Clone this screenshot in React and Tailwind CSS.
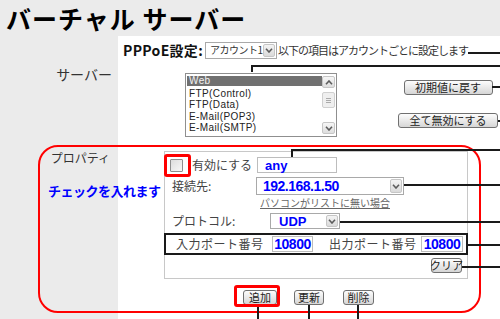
const Chevron = ({ up }) => (
  <svg width="8" height="5" viewBox="0 0 8 5">
    <polyline points={up ? "1,4.2 4,1 7,4.2" : "1,0.8 4,4 7,0.8"} fill="none" stroke="#5c5c5c" strokeWidth="1.6" />
  </svg>
);

function Select({ className, text, textClass, arrowClass }) {
  return (
    <div className={"flex items-stretch border border-[#a9a9a9] bg-white p-px " + className}>
      <div className={"flex-1 flex items-center whitespace-nowrap leading-none " + textClass}>{text}</div>
      <div className={"flex items-center justify-center bg-linear-to-b from-[#f4f4f4] to-[#dadada] border border-[#c6c6c6] rounded-[2px] " + arrowClass}>
        <Chevron />
      </div>
    </div>
  );
}

function Btn({ className, children }) {
  return (
    <div className={"flex items-center justify-center border border-[#707070] rounded-[3px] bg-linear-to-b from-[#fdfdfd] to-[#d6d6d6] text-[11px] leading-none text-[#222] whitespace-nowrap " + className}>
      {children}
    </div>
  );
}

function Input({ className, children }) {
  return (
    <div className={"flex items-center border border-[#bdbdbd] bg-white font-['Liberation_Sans',Arial,sans-serif] font-bold text-[#0000ff] leading-none " + className}>
      {children}
    </div>
  );
}

export default function App() {
  return (
    <div className="relative w-[500px] h-[319px] overflow-hidden bg-[#ebebeb] font-['Noto_Sans_CJK_JP',sans-serif] text-[#333]">
      <div className="h-[36px] pl-[6px] text-[25px] leading-[36px] font-bold tracking-[1px] text-black whitespace-nowrap">
        バーチャル サーバー
      </div>

      {/* PPPoE row */}
      <div className="flex h-[28px]">
        <div className="w-[118px] shrink-0" />
        <div className="flex-1 bg-white flex items-center pl-[5px] whitespace-nowrap">
          <span className="text-[14px] leading-[16px] font-bold text-[#111] tracking-[0.3px]">PPPoE設定:</span>
          <Select className="ml-[2px] w-[72px] h-[17px]" text="アカウント1" textClass="pl-[3px] text-[10px] tracking-[-0.5px] text-[#333]" arrowClass="w-[13px]" />
          <span className="ml-[1px] text-[11px] tracking-[-1px] leading-[16px] text-[#333]">以下の項目はアカウントごとに設定します</span>
        </div>
      </div>

      {/* Server row */}
      <div className="flex h-[82px]">
        <div className="w-[118px] shrink-0 text-right pr-[6px] pt-[2px] text-[14px] leading-[16px] text-[#333]">サーバー</div>
        <div className="flex-1 bg-white flex items-start">
          <div className="ml-[67px] mt-[9px] w-[152px] h-[64px] border border-[#8f8f8f] bg-white flex">
            <div className="flex-1 pt-[2px] pl-px font-['Liberation_Sans',Arial,sans-serif] text-[10px] tracking-[0.4px] leading-[11.5px] text-[#222] whitespace-nowrap">
              <div className="bg-[#707070] text-[#f2f2f2] pl-[2px] h-[10px] leading-[10px] mb-[1.5px]">Web</div>
              <div className="pl-[2px]">FTP(Control)</div>
              <div className="pl-[2px]">FTP(Data)</div>
              <div className="pl-[2px]">E-Mail(POP3)</div>
              <div className="pl-[2px]">E-Mail(SMTP)</div>
            </div>
            <div className="w-[14px] flex flex-col py-[2px] pr-px gap-[2px]">
              <div className="h-[12px] flex items-center justify-center border border-[#c6c6c6] rounded-[2px] bg-linear-to-b from-[#f6f6f6] to-[#dedede]">
                <Chevron up />
              </div>
              <div className="h-[16px] mt-[2px] flex flex-col items-center justify-center gap-[1px] border border-[#d0d0d0] rounded-[2px] bg-[#efefef]">
                <div className="w-[5px] h-px bg-[#aaa]" />
                <div className="w-[5px] h-px bg-[#aaa]" />
                <div className="w-[5px] h-px bg-[#aaa]" />
              </div>
              <div className="flex-1" />
              <div className="h-[12px] flex items-center justify-center border border-[#c6c6c6] rounded-[2px] bg-linear-to-b from-[#f6f6f6] to-[#dedede]">
                <Chevron />
              </div>
            </div>
          </div>
          <div className="ml-[61px] w-[100px] flex flex-col items-center pt-[16px] gap-[18px]">
            <Btn className="w-[89px] h-[15px]">初期値に戻す</Btn>
            <Btn className="w-[100px] h-[15px]">全て無効にする</Btn>
          </div>
        </div>
      </div>

      {/* Property row */}
      <div className="flex h-[173px]">
        <div className="w-[118px] shrink-0 text-right pr-[8px] pt-[4px] text-[12px] leading-[16px] text-[#333]">プロパティ</div>
        <div className="flex-1 bg-white pl-[46px] pt-[5px]">
          <div className="w-[304px] h-[128px] border border-[#c8c8c8] flex flex-col text-[12px] leading-[16px] text-[#444] whitespace-nowrap">
            <div className="flex items-center h-[16px] mt-[5px]">
              <div className="w-[92px] flex items-center pl-[5px]">
                <div className="w-[13px] h-[13px] border border-[#8e8e8e] bg-linear-to-br from-[#dcdcdc] to-[#f8f8f8] rounded-[1px]" />
                <span className="ml-[9px]">有効にする</span>
              </div>
              <Input className="w-[80px] h-[16px] pl-[7px] text-[13px]">any</Input>
            </div>
            <div className="flex items-center h-[18px] mt-[4px]">
              <div className="w-[91px] pl-[7px]">接続先:</div>
              <Select className="w-[148px] h-[18px]" text="192.168.1.50" textClass="pl-[5px] font-['Liberation_Sans',Arial,sans-serif] font-bold text-[14px] tracking-[-0.5px] text-[#0000ff]" arrowClass="w-[12px]" />
            </div>
            <div className="h-[14px] mt-px pl-[95px] text-[10px] leading-[14px] text-[#666] underline">パソコンがリストに無い場合</div>
            <div className="flex items-center h-[16px] mt-[3px]">
              <div className="w-[91px] pl-[7px]">プロトコル:</div>
              <Select className="ml-[14px] w-[70px] h-[16px]" text="UDP" textClass="pl-[7px] font-['Liberation_Sans',Arial,sans-serif] font-bold text-[13px] text-[#0000ff]" arrowClass="w-[12px]" />
            </div>
            <div className="-mx-px mt-[4px] h-[22px] border-2 border-[#1a1a1a] flex items-center text-[12px] tracking-[0.5px]">
              <span className="w-[106px] pl-[10px]">入力ポート番号</span>
              <Input className="w-[41px] h-[16px] justify-center text-[14px] tracking-[-0.5px]">10800</Input>
              <span className="ml-[16px] w-[92px]">出力ポート番号</span>
              <Input className="w-[42px] h-[16px] justify-center text-[14px] tracking-[-0.5px]">10800</Input>
            </div>
            <div className="flex justify-end pr-[5px] mt-[3px]">
              <Btn className="w-[31px] h-[15px]">クリア</Btn>
            </div>
          </div>
          <div className="flex mt-[11px] ml-[79px]">
            <Btn className="w-[34px] h-[15px]">追加</Btn>
            <Btn className="ml-[17px] w-[30px] h-[15px]">更新</Btn>
            <Btn className="ml-[19px] w-[31px] h-[15px]">削除</Btn>
          </div>
        </div>
      </div>

      {/* Annotations */}
      <div className="absolute left-[38px] top-[145px] w-[443px] h-[168px] border-2 border-[#ff0000] rounded-[20px]" />
      <div className="absolute left-[164px] top-[154px] w-[27px] h-[23px] border-[3px] border-[#ff0000] rounded-[3px]" />
      <div className="absolute left-[234px] top-[285px] w-[46px] h-[22px] border-[3px] border-[#ff0000] rounded-[3px]" />
      <div className="absolute left-[48px] top-[183px] text-[13px] leading-[16px] font-bold tracking-[-0.5px] text-[#0000ff] whitespace-nowrap">チェックを入れます</div>

      <div className="absolute left-[468px] top-[52px] w-[32px] h-[2px] bg-[#1a1a1a]" />
      <div className="absolute left-[251px] top-[65px] w-[249px] h-[2px] bg-[#1a1a1a]" />
      <div className="absolute left-[251px] top-[65px] w-[2px] h-[7px] bg-[#1a1a1a]" />
      <div className="absolute left-[492px] top-[86px] w-[8px] h-[2px] bg-[#1a1a1a]" />
      <div className="absolute left-[498px] top-[120px] w-[2px] h-[2px] bg-[#1a1a1a]" />
      <div className="absolute left-[291px] top-[149px] w-[209px] h-[2px] bg-[#1a1a1a]" />
      <div className="absolute left-[291px] top-[149px] w-[2px] h-[8px] bg-[#1a1a1a]" />
      <div className="absolute left-[404px] top-[184px] w-[96px] h-[2px] bg-[#1a1a1a]" />
      <div className="absolute left-[340px] top-[221px] w-[160px] h-[2px] bg-[#1a1a1a]" />
      <div className="absolute left-[468px] top-[244px] w-[32px] h-[2px] bg-[#1a1a1a]" />
      <div className="absolute left-[462px] top-[266px] w-[38px] h-[2px] bg-[#1a1a1a]" />
      <div className="absolute left-[257px] top-[307px] w-[2px] h-[12px] bg-[#1a1a1a]" />
      <div className="absolute left-[308px] top-[305px] w-[2px] h-[14px] bg-[#1a1a1a]" />
      <div className="absolute left-[357px] top-[305px] w-[2px] h-[14px] bg-[#1a1a1a]" />
    </div>
  );
}
